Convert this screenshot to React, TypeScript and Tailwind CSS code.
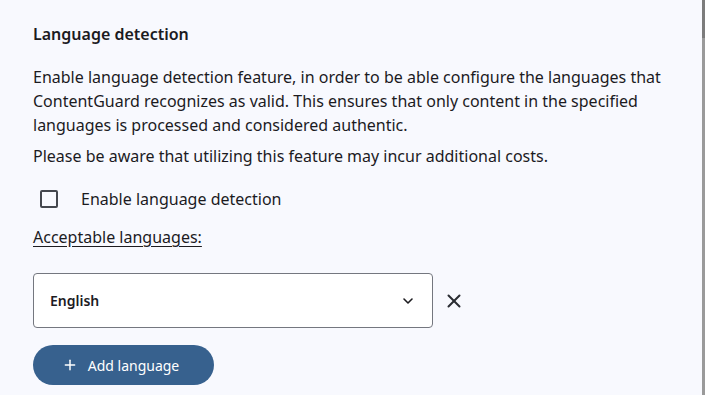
import { Plus, X, ChevronDown } from "lucide-react";

export default function App() {
  return (
    <div className="flex h-[395px] w-[705px] overflow-hidden bg-[#f8f9fe] text-[#1c1b1f] [font-family:'Noto_Sans',sans-serif]">
      <div className="flex-1 px-[33px] pt-[22px]">
        {/* Section title */}
        <h2 className="text-[16px] font-semibold leading-[24px]">
          Language detection
        </h2>

        <p className="mt-[19px] text-[16px] leading-[24px]">
          Enable language detection feature, in order to be able configure the
          languages that ContentGuard recognizes as valid. This ensures that
          only content in the specified languages is processed and considered
          authentic.
        </p>
        <p className="mt-[7px] text-[16px] leading-[24px]">
          Please be aware that utilizing this feature may incur additional
          costs.
        </p>

        {/* Checkbox */}
        <label className="mt-[11px] flex h-[40px] items-center gap-[23px] pl-[7px]">
          <span className="h-[18px] w-[18px] rounded-[2px] border-2 border-[#44474e]" />
          <span className="text-[16px] leading-[24px]">
            Enable language detection
          </span>
        </label>

        <div className="mt-[6px] text-[16px] leading-[24px] underline underline-offset-[3px]">
          Acceptable languages:
        </div>

        {/* Language row */}
        <div className="mt-[24px] flex items-center">
          <div className="flex h-[55px] w-[400px] items-center justify-between rounded-[4px] border border-[#74777f] bg-white pl-[16px] pr-[16px]">
            <span className="text-[14px] font-semibold">English</span>
            <ChevronDown className="h-[16px] w-[16px] text-[#1c1b1f]" strokeWidth={2.4} />
          </div>
          <button className="ml-[9px] flex h-[24px] w-[24px] items-center justify-center text-[#2b2d33]">
            <X className="h-[22px] w-[22px]" strokeWidth={2.2} />
          </button>
        </div>

        <button className="mt-[17px] flex h-[40px] w-[181px] items-center justify-center gap-[10px] rounded-full bg-[#37618e] pr-[6px] text-[14px] text-white">
          <Plus className="h-[16px] w-[16px]" strokeWidth={2.2} />
          Add language
        </button>
      </div>

      {/* Scrollbar edge */}
      <div className="flex w-[3px] flex-col bg-[#9a9a9a]">
        <div className="h-[38px] bg-[#7c7c7c]" />
      </div>
    </div>
  );
}
